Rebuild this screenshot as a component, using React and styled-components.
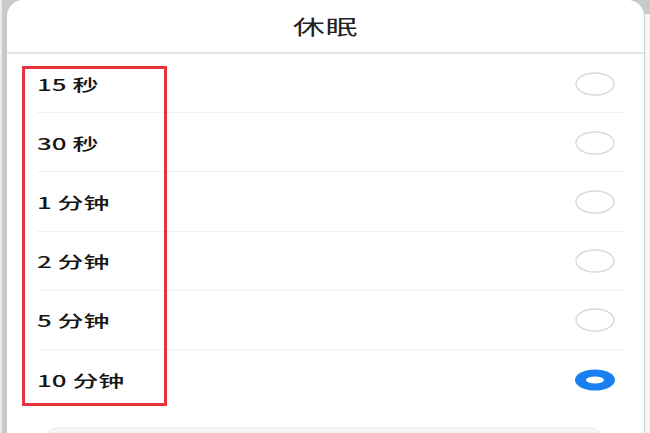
import React from 'react';
import styled, { createGlobalStyle } from 'styled-components';

const GlobalStyle = createGlobalStyle`
  html, body {
    margin: 0;
    padding: 0;
    background: #cbcbcb;
    font-family: "Noto Sans CJK SC", "Noto Sans", sans-serif;
  }
`;

const Screen = styled.div`
  display: flex;
  width: 650px;
  height: 433px;
  overflow: hidden;
  background: #c9c9c9;
  border-left: 2px solid #ececec;
  box-sizing: border-box;
`;

const SideGap = styled.div`
  width: 5px;
  flex-shrink: 0;
`;

const RightEdge = styled.div`
  flex: 1;
  margin-top: 14px;
  background: #f6f6f6;
  border-left: 1px solid #cfcfcf;
`;

const Sheet = styled.div`
  position: relative;
  width: 637px;
  flex-shrink: 0;
  background: #fff;
  border-radius: 16px 16px 0 0;
  display: flex;
  flex-direction: column;
`;

const Header = styled.div`
  flex-shrink: 0;
  height: 52px;
  display: flex;
  align-items: center;
  justify-content: center;
  border-bottom: 2px solid #e4e4e4;
`;

const Title = styled.span`
  display: inline-block;
  font-size: 20px;
  color: #222;
  transform: scaleX(1.6);
  letter-spacing: 0.5px;
`;

const List = styled.div`
  flex-shrink: 0;
  display: flex;
  flex-direction: column;
`;

const Row = styled.div`
  flex-shrink: 0;
  height: 59.2px;
  box-sizing: border-box;
  margin: 0 21px 0 30px;
  display: flex;
  align-items: center;
  justify-content: space-between;
  border-bottom: ${(p) => (p.$last ? 'none' : '1px solid #f0f0f0')};
  padding-top: 1px;
`;

const Label = styled.span`
  display: inline-block;
  font-size: 16px;
  font-weight: 500;
  color: #161616;
  transform: scaleX(1.62);
  transform-origin: left center;
  white-space: nowrap;
`;

const RadioWrap = styled.span`
  display: flex;
  margin-right: 7px;
`;

const Marker = styled.div`
  position: absolute;
  left: 15px;
  top: 66px;
  width: 145px;
  height: 340px;
  box-sizing: border-box;
  border: 3px solid #e6333d;
  pointer-events: none;
`;

const CancelButton = styled.div`
  flex-shrink: 0;
  margin: 18px 34px 0 30px;
  height: 48px;
  border-radius: 24px;
  background: #f6f6f6;
  border: 1px solid #ececec;
`;

const Radio = ({ checked }) =>
  checked ? (
    <svg width="42" height="24" viewBox="0 0 42 24">
      <path
        fillRule="evenodd"
        fill="#1a80f2"
        d="M1 12a20 10.5 0 1 0 40 0a20 10.5 0 1 0 -40 0z M12 12a9 3.6 0 1 1 18 0a9 3.6 0 1 1 -18 0z"
      />
    </svg>
  ) : (
    <svg width="42" height="24" viewBox="0 0 42 24">
      <ellipse cx="21" cy="12" rx="19" ry="11" fill="none" stroke="#d9d9d9" strokeWidth="1.4" />
    </svg>
  );

const options = ['15 秒', '30 秒', '1 分钟', '2 分钟', '5 分钟', '10 分钟'];

export default function App() {
  const selected = 5;
  return (
    <>
      <GlobalStyle />
      <Screen>
        <SideGap />
        <Sheet>
          <Header>
            <Title>休眠</Title>
          </Header>
          <List>
            {options.map((o, i) => (
              <Row key={o} $last={i === options.length - 1}>
                <Label>{o}</Label>
                <RadioWrap>
                  <Radio checked={i === selected} />
                </RadioWrap>
              </Row>
            ))}
          </List>
          <CancelButton />
          <Marker />
        </Sheet>
        <RightEdge />
      </Screen>
    </>
  );
}
